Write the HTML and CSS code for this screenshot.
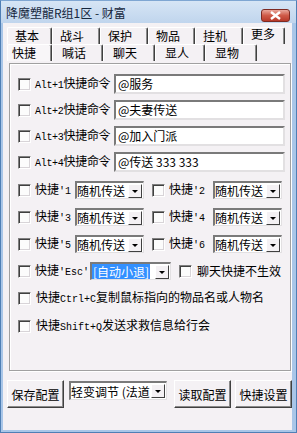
FILE: index.html
```html
<!DOCTYPE html>
<html lang="zh">
<head>
    <meta charset="UTF-8">
    <title>降魔塑龍R组1区 - 财富</title>
    <link rel="stylesheet" href="styles.css">
</head>
<body>
    <div class="window">
        <div class="titlebar">
            <span class="title">降魔塑龍R组1区 - 财富</span>
            <span class="close">
                <svg width="13" height="9" viewBox="0 0 13 9"><path d="M2 1 L11 8 M11 1 L2 8" stroke="#fff" stroke-width="2.4" fill="none"/></svg>
            </span>
        </div>
        <div class="client">
            <div class="tabs">
                <div class="tab-row">
                    <div class="tab w45">基本</div>
                    <div class="tab w48">战斗</div>
                    <div class="tab w48">保护</div>
                    <div class="tab w47">物品</div>
                    <div class="tab w48">挂机</div>
                    <div class="tab w42 raised">更多</div>
                </div>
                <div class="tab-row front">
                    <div class="tab w45 active">快捷</div>
                    <div class="tab w51">喊话</div>
                    <div class="tab w52">聊天</div>
                    <div class="tab w50">显人</div>
                    <div class="tab w52">显物</div>
                </div>
            </div>

            <div class="panel">
                <div class="cmd-row">
                    <span class="check"></span>
                    <span class="cmd-label"><span class="mono">Alt+1</span>快捷命令</span>
                    <span class="edit">@服务</span>
                </div>
                <div class="cmd-row">
                    <span class="check"></span>
                    <span class="cmd-label"><span class="mono">Alt+2</span>快捷命令</span>
                    <span class="edit">@夫妻传送</span>
                </div>
                <div class="cmd-row">
                    <span class="check"></span>
                    <span class="cmd-label"><span class="mono">Alt+3</span>快捷命令</span>
                    <span class="edit">@加入门派</span>
                </div>
                <div class="cmd-row">
                    <span class="check"></span>
                    <span class="cmd-label"><span class="mono">Alt+4</span>快捷命令</span>
                    <span class="edit">@传送 333 333</span>
                </div>

                <div class="keys">
                    <div class="key-row">
                        <div class="cell">
                            <span class="check"></span>
                            <span class="key-label">快捷<span class="mono">'1</span></span>
                            <span class="combo w69"><span class="combo-text">随机传送</span><span class="drop"></span></span>
                        </div>
                        <div class="cell">
                            <span class="check"></span>
                            <span class="key-label wide">快捷<span class="mono">'2</span></span>
                            <span class="combo w69"><span class="combo-text">随机传送</span><span class="drop"></span></span>
                        </div>
                    </div>
                    <div class="key-row">
                        <div class="cell">
                            <span class="check"></span>
                            <span class="key-label">快捷<span class="mono">'3</span></span>
                            <span class="combo w69"><span class="combo-text">随机传送</span><span class="drop"></span></span>
                        </div>
                        <div class="cell">
                            <span class="check"></span>
                            <span class="key-label wide">快捷<span class="mono">'4</span></span>
                            <span class="combo w69"><span class="combo-text">随机传送</span><span class="drop"></span></span>
                        </div>
                    </div>
                    <div class="key-row">
                        <div class="cell">
                            <span class="check"></span>
                            <span class="key-label">快捷<span class="mono">'5</span></span>
                            <span class="combo w69"><span class="combo-text">随机传送</span><span class="drop"></span></span>
                        </div>
                        <div class="cell">
                            <span class="check"></span>
                            <span class="key-label wide">快捷<span class="mono">'6</span></span>
                            <span class="combo w69"><span class="combo-text">随机传送</span><span class="drop"></span></span>
                        </div>
                    </div>
                    <div class="key-row">
                        <span class="check"></span>
                        <span class="key-label esc">快捷<span class="mono">'Esc'</span></span>
                        <span class="combo w81"><span class="combo-text"><span class="selected">[自动小退]</span></span><span class="drop"></span></span>
                        <span class="check ml8"></span>
                        <span class="plain-label">聊天快捷不生效</span>
                    </div>
                </div>

                <div class="opt-row first">
                    <span class="check"></span>
                    <span class="plain-label">快捷<span class="mono">Ctrl+C</span>复制鼠标指向的物品名或人物名</span>
                </div>
                <div class="opt-row">
                    <span class="check"></span>
                    <span class="plain-label">快捷<span class="mono">Shift+Q</span>发送求救信息给行会</span>
                </div>
            </div>

            <div class="bottom-bar">
                <span class="button">保存配置</span>
                <span class="combo w98 bottom-combo"><span class="combo-text">轻变调节 (法道</span><span class="drop"></span></span>
                <span class="button ml7">读取配置</span>
                <span class="button ml4">快捷设置</span>
            </div>
        </div>
    </div>
</body>
</html>
```

FILE: styles.css
```css
body {
    margin: 0;
    font-family: "Noto Sans CJK SC", sans-serif;
    font-size: 12px;
    color: #000;
}

.window {
    width: 297px;
    height: 433px;
    box-sizing: border-box;
    display: flex;
    flex-direction: column;
    background-color: #a9c6e8;
    border: 1px solid #4f7fb5;
    border-top-color: #7fa6d2;
}

.titlebar {
    height: 22px;
    display: flex;
    align-items: flex-start;
    background: linear-gradient(#d6e5f5, #c0d5ed);
}

.title {
    margin: 4px 0 0 5px;
    font-size: 12px;
    line-height: 16px;
    color: #14263c;
}

.close {
    margin: 8px 6px 0 auto;
    width: 29px;
    height: 13px;
    box-sizing: border-box;
    border: 1px solid #7d2a22;
    border-radius: 3px;
    background: linear-gradient(#e9a79b, #cf5a48 50%, #b8392a);
    display: flex;
    align-items: center;
    justify-content: center;
}

.client {
    flex: 1;
    margin: 0 4px 2px 2px;
    background-color: #f4f1f4;
    display: flex;
    flex-direction: column;
}

/* tabs */
.tabs {
    margin: 4px 0 0 4px;
}

.tab-row {
    display: flex;
    height: 17px;
}

.tab {
    box-sizing: border-box;
    height: 17px;
    padding-left: 7px;
    border-top: 1px solid #fff;
    border-left: 1px solid #fff;
    border-right: 1px solid #404040;
    box-shadow: inset -1px 0 #8a8a8a;
    border-radius: 2px 2px 0 0;
    font-size: 12px;
    line-height: 16px;
    white-space: nowrap;
}

.tab.raised {
    line-height: 12px;
}

.tab-row.front .tab {
    padding-left: 9px;
}

.tab-row.front .tab.active {
    padding-left: 4px;
    background-color: #f8f6f8;
}

.w42 { width: 42px; }
.w45 { width: 45px; }
.w47 { width: 47px; }
.w48 { width: 48px; }
.w50 { width: 50px; }
.w51 { width: 51px; }
.w52 { width: 52px; }
.w69 { width: 69px; }
.w81 { width: 81px; }
.w98 { width: 98px; }

/* main page */
.panel {
    margin: 2px 1px 0 6px;
    height: 308px;
    box-sizing: border-box;
    padding: 10px 0 0 8px;
    border: 1px solid #a0a0a0;
    box-shadow: inset 1px 1px #fff, 1px 1px #fff;
}

.check {
    flex: none;
    width: 13px;
    height: 13px;
    box-sizing: border-box;
    background-color: #fcfcfc;
    border-top: 1px solid #808080;
    border-left: 1px solid #808080;
    border-right: 1px solid #fff;
    border-bottom: 1px solid #fff;
    box-shadow: inset 1px 1px #404040, inset -1px -1px #d8d4d8;
}

.mono {
    font-family: "Liberation Mono", monospace;
    font-size: 10px;
}

.cmd-row {
    display: flex;
    align-items: center;
    height: 20px;
    margin-bottom: 6px;
}

.cmd-label {
    width: 79px;
    margin-left: 4px;
    white-space: nowrap;
    line-height: 16px;
    letter-spacing: -0.3px;
}

.edit {
    width: 171px;
    height: 20px;
    box-sizing: border-box;
    padding-left: 2px;
    background-color: #fff;
    border-top: 2px solid #7a7a7a;
    border-left: 2px solid #7a7a7a;
    border-right: 2px solid #e2e0e2;
    border-bottom: 2px solid #e2e0e2;
    line-height: 16px;
    white-space: nowrap;
}

.keys {
    margin-top: 9px;
}

.key-row {
    display: flex;
    align-items: center;
    height: 18px;
    margin-bottom: 9px;
}

.cell {
    width: 134px;
    display: flex;
    align-items: center;
}

.key-label {
    width: 40px;
    margin-left: 4px;
    white-space: nowrap;
    line-height: 16px;
}

.key-label.wide {
    width: 44px;
}

.key-label.esc {
    width: 55px;
}

.combo {
    flex: none;
    height: 18px;
    box-sizing: border-box;
    display: flex;
    align-items: center;
    background-color: #fff;
    border-top: 2px solid #7a7a7a;
    border-left: 2px solid #7a7a7a;
    border-right: 1px solid #e2e0e2;
    border-bottom: 1px solid #e2e0e2;
    overflow: hidden;
}

.combo-text {
    flex: 1;
    overflow: hidden;
    white-space: nowrap;
    line-height: 15px;
}

.selected {
    background-color: #3390ff;
    color: #fff;
    padding: 0 1px;
}

.drop {
    flex: none;
    width: 14px;
    height: 14px;
    box-sizing: border-box;
    margin-right: 1px;
    background-color: #f4f1f4;
    border-top: 1px solid #fff;
    border-left: 1px solid #fff;
    border-right: 1px solid #404040;
    border-bottom: 1px solid #404040;
    position: relative;
}

.drop::after {
    content: "";
    position: absolute;
    left: 3px;
    top: 5px;
    border-left: 3px solid transparent;
    border-right: 3px solid transparent;
    border-top: 3px solid #000;
}

.ml8 { margin-left: 8px; }
.ml7 { margin-left: 7px; }
.ml4 { margin-left: 4px; }

.plain-label {
    margin-left: 5px;
    white-space: nowrap;
    line-height: 16px;
}

.opt-row {
    display: flex;
    align-items: center;
    height: 16px;
    margin-top: 12px;
}

.opt-row.first {
    margin-top: 10px;
}

/* bottom buttons */
.bottom-bar {
    display: flex;
    align-items: flex-start;
    margin: 9px 0 0 4px;
}

.button {
    width: 57px;
    height: 28px;
    box-sizing: border-box;
    display: flex;
    align-items: center;
    justify-content: center;
    background-color: #f4f1f4;
    border-top: 1px solid #fff;
    border-left: 1px solid #fff;
    border-right: 1px solid #404040;
    border-bottom: 1px solid #404040;
    box-shadow: inset -1px -1px #8a8a8a;
    white-space: nowrap;
}

.bottom-combo {
    height: 19px;
    margin: 1px 0 0 5px;
}
```
